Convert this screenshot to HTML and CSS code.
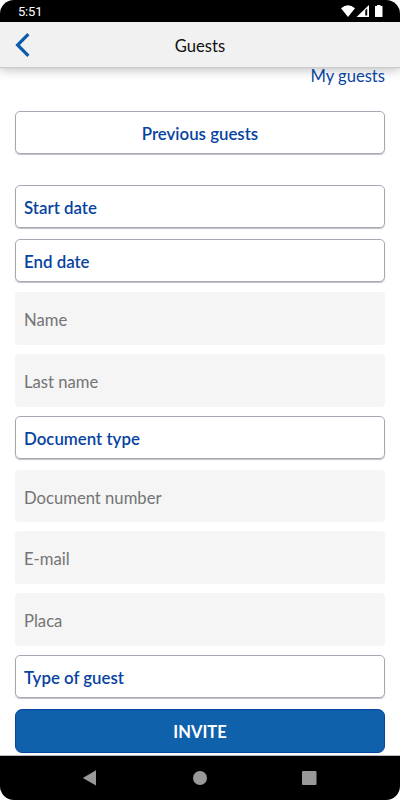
FILE: index.html
```html
<!DOCTYPE html>
<html lang="en">
<head>
    <meta charset="UTF-8">
    <meta name="viewport" content="width=device-width, initial-scale=1.0">
    <title>Guests</title>
    <link rel="stylesheet" href="styles.css">
</head>
<body>

    <div class="phone">
        <!-- Status bar -->
        <div class="status-bar">
            <span class="time">5:51</span>
            <svg class="status-icons" width="44" height="14" viewBox="0 0 44 14">
                <path d="M1 3.3 Q8 -3 15 3.3 L8 12 Z" fill="#fff"/>
                <path d="M16.5 12 L29 0 V12 Z" fill="#fff"/>
                <path d="M25.3 5.3 L27.2 3.5 V10.5 H25.3 Z" fill="#000"/>
                <path d="M37 1 V0 H40.5 V1 H42.5 V12 H35 V1 Z" fill="#fff"/>
            </svg>
        </div>

        <header class="header">
            <svg class="back" width="16" height="24" viewBox="0 0 16 24">
                <path d="M13.4 1.2 L2.6 12 L13.4 22.8" fill="none" stroke="#0b5cab" stroke-width="3.2"/>
            </svg>
            <h1>Guests</h1>
        </header>

        <main class="content">
            <a class="my-guests">My guests</a>
            <div class="select previous">Previous guests</div>

            <div class="form">
                <div class="select">Start date</div>
                <div class="select">End date</div>
                <div class="field">Name</div>
                <div class="field">Last name</div>
                <div class="select">Document type</div>
                <div class="field">Document number</div>
                <div class="field">E-mail</div>
                <div class="field">Placa</div>
                <div class="select">Type of guest</div>
                <div class="invite">INVITE</div>
            </div>
        </main>

        <!-- Android navigation -->
        <nav class="nav-bar">
            <svg width="16" height="16" viewBox="0 0 16 16"><path d="M0.8 7.9 L14 0.2 V15.4 Z"/></svg>
            <svg width="16" height="16" viewBox="0 0 16 16"><circle cx="8" cy="8" r="7"/></svg>
            <svg width="16" height="16" viewBox="0 0 16 16"><rect x="1" y="1" width="14.5" height="14" rx="1"/></svg>
        </nav>
    </div>

</body>
</html>
```
FILE: styles.css
```css
* {
    box-sizing: border-box;
}
body {
    font-family: Lato, sans-serif;
    margin: 0;
    background-color: #fff;
}
.phone {
    display: flex;
    flex-direction: column;
    height: 800px;
    overflow: hidden;
    border-radius: 14px;
    background-color: #fff;
}
.status-bar {
    display: flex;
    flex: none;
    justify-content: space-between;
    height: 22px;
    padding: 5px 16px 0 18px;
    background-color: #000;
    color: #fff;
}
.time {
    font-family: Roboto, sans-serif;
    font-size: 13px;
    letter-spacing: -0.2px;
    line-height: 14px;
}
.header {
    display: grid;
    flex: none;
    grid-template-columns: 16px 1fr 16px;
    align-items: center;
    height: 45px;
    padding: 0 15px;
    background-color: #f1f1f1;
    box-shadow: 0 1px 1px #ccc, 0 3px 10px rgba(0, 0, 0, 0.25);
}
.header h1 {
    margin: 2px 0 0;
    font-size: 16.6px;
    font-weight: 400;
    text-align: center;
    color: #111;
}
.content {
    display: flex;
    flex: 1;
    flex-direction: column;
    padding: 0 15px;
}
.my-guests {
    height: 44px;
    line-height: 18px;
    font-size: 16.6px;
    text-align: right;
    color: #0a459f;
}
.select {
    flex: none;
    height: 43px;
    padding: 0 8px;
    border: 1px solid #a5a7b2;
    border-radius: 5px;
    box-shadow: 0 1px 1px rgba(0, 0, 0, 0.25);
    font-size: 16.85px;
    font-weight: 600;
    line-height: 43px;
    color: #0743a0;
}
.previous {
    margin-bottom: 31px;
    text-align: center;
}
.form .select {
    margin-bottom: 10.7px;
}
.field {
    height: 52.5px;
    margin-bottom: 9.3px;
    padding: 0 9px;
    border-radius: 4px;
    background-color: #f5f5f5;
    font-size: 16.65px;
    line-height: 56px;
    color: #747474;
}
.invite {
    height: 44px;
    border: 1px solid #0743a0;
    border-radius: 7px;
    background-color: #0f61ac;
    font-size: 16.5px;
    font-weight: 700;
    line-height: 44px;
    text-align: center;
    color: #fff;
}
.nav-bar {
    display: flex;
    flex: none;
    justify-content: space-between;
    align-items: center;
    height: 45px;
    padding: 0 83px 0 82px;
    border-top: 1px solid #bbb;
    background-color: #000;
    fill: #999;
}
```
